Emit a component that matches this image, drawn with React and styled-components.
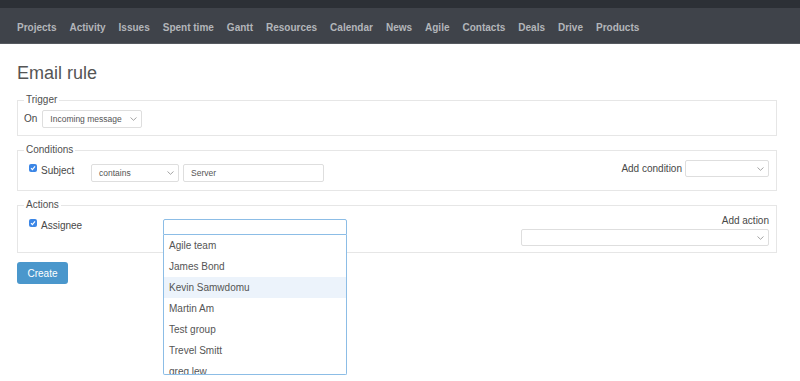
import React from "react";
import styled, { createGlobalStyle } from "styled-components";

const GlobalStyle = createGlobalStyle`
  body {
    margin: 0;
    background: #fff;
    font-family: "Liberation Sans", Arial, sans-serif;
    color: #484848;
  }
`;

const menu = [
  "Projects",
  "Activity",
  "Issues",
  "Spent time",
  "Gantt",
  "Resources",
  "Calendar",
  "News",
  "Agile",
  "Contacts",
  "Deals",
  "Drive",
  "Products",
];

const people = [
  "Agile team",
  "James Bond",
  "Kevin Samwdomu",
  "Martin Am",
  "Test group",
  "Trevel Smitt",
  "greg lew",
];

const Page = styled.div`
  min-height: 100vh;
`;

const TopStrip = styled.div`
  height: 8px;
  background: #2c3036;
`;

const NavBar = styled.nav`
  height: 35px;
  background: #3f434a;
  border-bottom: 1px solid #55595f;
  display: flex;
  align-items: center;
  gap: 13px;
  padding: 0 17px;
`;

const NavLink = styled.a`
  font-size: 10px;
  font-weight: bold;
  color: #b3b6ba;
  text-decoration: none;
  padding-top: 3px;
`;

const Content = styled.main`
  padding: 0 23px 0 17px;
`;

const Title = styled.h2`
  margin: 18px 0 10px;
  font-size: 18px;
  line-height: 22px;
  font-weight: normal;
  color: #555;
`;

const Box = styled.fieldset`
  margin: 0 0 ${(p) => p.$gap ?? 8}px;
  border: 1px solid #e6e6e6;
  padding: 4px 7px ${(p) => p.$bottom ?? 7}px 6px;
  min-width: 0;
  overflow: visible;
`;

const Legend = styled.legend`
  padding: 0 2px;
  font-size: 10px;
  line-height: 12px;
  color: #505050;
`;

const Row = styled.div`
  display: flex;
  justify-content: space-between;
  align-items: flex-start;
`;

const Group = styled.div`
  display: flex;
  align-items: flex-start;
  margin-top: ${(p) => p.$top ?? 0}px;
`;

const InlineGroup = styled.div`
  display: flex;
  align-items: center;
  gap: ${(p) => p.$gap ?? 3}px;
`;

const StackGroup = styled.div`
  display: flex;
  flex-direction: column;
  align-items: flex-end;
  gap: 2px;
`;

const Text = styled.span`
  font-size: 10px;
  line-height: 12px;
  color: #484848;
`;

const FieldLabel = styled.label`
  display: flex;
  align-items: flex-start;
  width: ${(p) => p.$width}px;
  margin-left: 5px;
  font-size: 10px;
  color: #484848;
`;

const LabelText = styled.span`
  margin-left: 4px;
  padding-top: 1px;
  line-height: 12px;
`;

const Check = styled.span`
  width: 8px;
  height: 8px;
  border-radius: 2px;
  background: #3b86e6;
  display: inline-flex;
  align-items: center;
  justify-content: center;
  flex: none;
`;

const SelectBox = styled.div`
  box-sizing: border-box;
  width: ${(p) => p.$width}px;
  height: ${(p) => p.$height ?? 17}px;
  border: 1px solid #dedede;
  border-radius: 2px;
  background: #fff;
  display: flex;
  align-items: center;
  justify-content: space-between;
  padding: 0 4px 0 7px;
  font-size: 8.5px;
  color: #555;
  margin-right: ${(p) => p.$mr ?? 0}px;
`;

const InputBox = styled.div`
  box-sizing: border-box;
  width: ${(p) => p.$width}px;
  height: 18px;
  border: 1px solid #dedede;
  border-radius: 2px;
  background: #fff;
  display: flex;
  align-items: center;
  padding: 0 7px;
  font-size: 8.5px;
  color: #555;
`;

const Combo = styled.div`
  position: relative;
  width: 184px;
`;

const ComboInput = styled.div`
  box-sizing: border-box;
  height: 16px;
  border: 1px solid #8cbde6;
  border-radius: 2px 2px 0 0;
  background: #fff;
`;

const ComboList = styled.ul`
  position: absolute;
  top: 100%;
  left: 0;
  right: 0;
  box-sizing: border-box;
  height: 140px;
  margin: 0;
  padding: 0;
  list-style: none;
  background: #fff;
  border: 1px solid #8cbde6;
  border-top: none;
  border-radius: 0 0 2px 2px;
  overflow: hidden;
  z-index: 2;
`;

const ComboItem = styled.li`
  height: 21px;
  line-height: 21px;
  padding-left: 5px;
  font-size: 10px;
  color: #555;
  background: ${(p) => (p.$active ? "#ecf3fb" : "transparent")};
`;

const Button = styled.button`
  width: 51px;
  height: 22px;
  border: none;
  border-radius: 3px;
  background: #4a97cc;
  color: #fff;
  font-family: inherit;
  font-size: 10px;
  padding: 0;
  margin-top: 1px;
`;

const Chevron = () => (
  <svg width="7" height="4" viewBox="0 0 7 4" fill="none">
    <polyline points="0.5,0.5 3.5,3.3 6.5,0.5" stroke="#9a9a9a" strokeWidth="0.9" />
  </svg>
);

const Tick = () => (
  <svg width="6" height="6" viewBox="0 0 6 6" fill="none">
    <polyline points="1,3.2 2.4,4.6 5,1.4" stroke="#fff" strokeWidth="1.2" />
  </svg>
);

const Select = ({ value, ...rest }) => (
  <SelectBox {...rest}>
    <span>{value}</span>
    <Chevron />
  </SelectBox>
);

const App = () => {
  return (
    <Page>
      <GlobalStyle />
      <TopStrip />
      <NavBar>
        {menu.map((item) => (
          <NavLink key={item} href="#">
            {item}
          </NavLink>
        ))}
      </NavBar>

      <Content>
        <Title>Email rule</Title>

        <Box $bottom={7}>
          <Legend>Trigger</Legend>
          <InlineGroup $gap={5}>
            <Text>On</Text>
            <Select value="Incoming message" $width={100} $height={18} />
          </InlineGroup>
        </Box>

        <Box $bottom={8}>
          <Legend>Conditions</Legend>
          <Row>
            <Group $top={4}>
              <FieldLabel $width={62}>
                <Check>
                  <Tick />
                </Check>
                <LabelText>Subject</LabelText>
              </FieldLabel>
              <Select value="contains" $width={88} $height={18} $mr={4} />
              <InputBox $width={141}>Server</InputBox>
            </Group>
            <InlineGroup $gap={3}>
              <Text>Add condition</Text>
              <Select value="" $width={84} />
            </InlineGroup>
          </Row>
        </Box>

        <Box $bottom={6}>
          <Legend>Actions</Legend>
          <Row>
            <Group $top={4}>
              <FieldLabel $width={134}>
                <Check>
                  <Tick />
                </Check>
                <LabelText>Assignee</LabelText>
              </FieldLabel>
              <Combo>
                <ComboInput />
                <ComboList>
                  {people.map((name) => (
                    <ComboItem key={name} $active={name === "Kevin Samwdomu"}>
                      {name}
                    </ComboItem>
                  ))}
                </ComboList>
              </Combo>
            </Group>
            <StackGroup>
              <Text>Add action</Text>
              <Select value="" $width={248} />
            </StackGroup>
          </Row>
        </Box>

        <Button>Create</Button>
      </Content>
    </Page>
  );
};

export default App;
